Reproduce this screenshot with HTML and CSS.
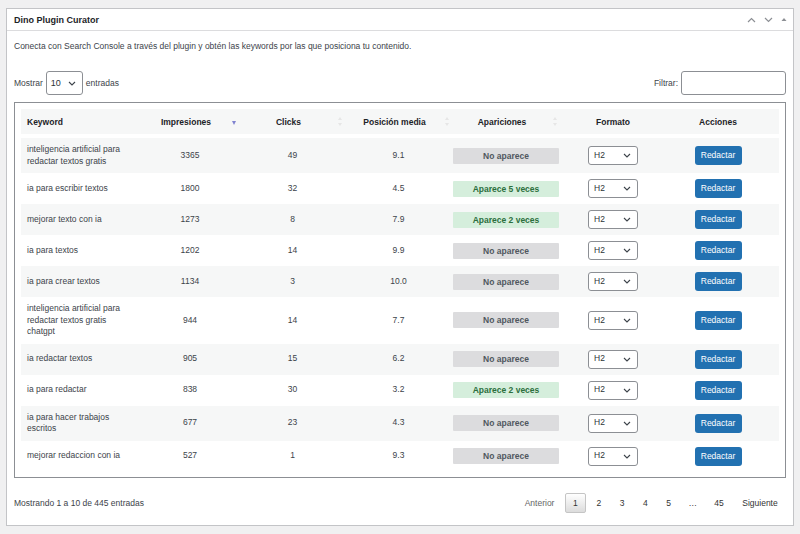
FILE: index.html
```html
<!DOCTYPE html>
<html lang="es">
<head>
<meta charset="utf-8">
<title>Dino Plugin Curator</title>
<link rel="stylesheet" href="styles.css">
</head>
<body>
<div class="panel">
  <div class="panel-head">
    <h2 class="panel-title">Dino Plugin Curator</h2>
    <div class="head-actions">
      <svg width="9" height="6" viewBox="0 0 9 6"><path d="M1 5 L4.5 1.5 L8 5" fill="none" stroke="#8c8f94" stroke-width="1.2"/></svg>
      <svg width="9" height="6" viewBox="0 0 9 6"><path d="M1 1 L4.5 4.5 L8 1" fill="none" stroke="#8c8f94" stroke-width="1.2"/></svg>
      <svg width="6" height="5" viewBox="0 0 6 5"><path d="M0.5 4 L3 1 L5.5 4 Z" fill="#8c8f94"/></svg>
    </div>
  </div>
  <div class="panel-body">
    <p class="desc">Conecta con Search Console a través del plugin y obtén las keywords por las que posiciona tu contenido.</p>
    <div class="controls">
      <label class="length">Mostrar
        <span class="sel sel-len"><span>10</span><svg width="8" height="5" viewBox="0 0 8 5"><path d="M1 1 L4 4 L7 1" fill="none" stroke="#3c434a" stroke-width="1.1"/></svg></span>
        entradas</label>
      <label class="filter">Filtrar: <span class="input"></span></label>
    </div>
    <div class="table-wrap">
      <table class="kw">
        <colgroup>
          <col style="width:119px"><col style="width:100px"><col style="width:105px"><col style="width:107px"><col style="width:108px"><col style="width:106px"><col style="width:113px">
        </colgroup>
        <thead>
          <tr>
            <th class="left">Keyword</th>
            <th class="sort">Impresiones<span class="ico active"></span></th>
            <th class="sort">Clicks<span class="ico both"></span></th>
            <th class="sort">Posición media<span class="ico both"></span></th>
            <th class="sort">Apariciones<span class="ico both"></span></th>
            <th>Formato</th>
            <th class="act">Acciones</th>
          </tr>
        </thead>
        <tbody id="rows"></tbody>
      </table>
    </div>
    <div class="footer">
      <div class="info">Mostrando 1 a 10 de 445 entradas</div>
      <div class="pager">
        <span class="pg disabled">Anterior</span>
        <span class="pg current">1</span>
        <span class="pg">2</span>
        <span class="pg">3</span>
        <span class="pg">4</span>
        <span class="pg">5</span>
        <span class="pg ell">…</span>
        <span class="pg">45</span>
        <span class="pg">Siguiente</span>
      </div>
    </div>
  </div>
</div>
<script>
var data = [
  ["inteligencia artificial para redactar textos gratis","3365","49","9.1",0],
  ["ia para escribir textos","1800","32","4.5",5],
  ["mejorar texto con ia","1273","8","7.9",2],
  ["ia para textos","1202","14","9.9",0],
  ["ia para crear textos","1134","3","10.0",0],
  ["inteligencia artificial para redactar textos gratis chatgpt","944","14","7.7",0],
  ["ia redactar textos","905","15","6.2",0],
  ["ia para redactar","838","30","3.2",2],
  ["ia para hacer trabajos escritos","677","23","4.3",0],
  ["mejorar redaccion con ia","527","1","9.3",0]
];
var html = "";
data.forEach(function(r){
  var badge = r[4] ? '<span class="badge yes">Aparece ' + r[4] + ' veces</span>' : '<span class="badge no">No aparece</span>';
  html += '<tr><td class="left">' + r[0] + '</td><td>' + r[1] + '</td><td>' + r[2] + '</td><td>' + r[3] + '</td>' +
    '<td class="bcell">' + badge + '</td>' +
    '<td><span class="sel sel-fmt"><span>H2</span><svg width="8" height="5" viewBox="0 0 8 5"><path d="M1 1 L4 4 L7 1" fill="none" stroke="#3c434a" stroke-width="1.1"/></svg></span></td>' +
    '<td class="act"><span class="btn">Redactar</span></td></tr>';
});
document.getElementById("rows").innerHTML = html;
</script>
</body>
</html>
```

FILE: styles.css
```css
* { box-sizing: border-box; }
html, body { margin: 0; padding: 0; }
body {
  background: #f0f0f1;
  font-family: "Liberation Sans", Arial, Helvetica, sans-serif;
  color: #3c434a;
  font-size: 8.5px;
  padding: 8px 6px 8px 6px;
}
.panel {
  background: #fff;
  border: 1px solid #c3c4c7;
  height: 518px;
}
.panel-head {
  height: 22px;
  border-bottom: 1px solid #dcdcde;
  display: flex;
  align-items: center;
  justify-content: space-between;
  padding: 0 6px 0 7px;
}
.panel-title {
  margin: 0;
  font-size: 9px;
  font-weight: bold;
  color: #1d2327;
}
.head-actions {
  display: flex;
  align-items: center;
  gap: 8px;
}
.panel-body {
  padding: 0 7px;
}
.desc {
  margin: 0;
  padding-top: 9px;
  line-height: 12px;
  font-size: 8.5px;
}
.controls {
  margin-top: 19px;
  height: 24px;
  display: flex;
  justify-content: space-between;
  align-items: center;
}
.length, .filter {
  display: flex;
  align-items: center;
  gap: 3px;
}
.sel {
  display: inline-flex;
  align-items: center;
  justify-content: space-between;
  background: #fff;
  border: 1px solid #8c8f94;
  border-radius: 3px;
  color: #2c3338;
}
.sel-len {
  width: 37px;
  height: 24px;
  padding: 0 6px 0 4px;
  font-size: 9px;
}
.sel-fmt {
  width: 50px;
  height: 19px;
  padding: 0 6px 0 5px;
  font-size: 8.5px;
  vertical-align: middle;
}
.input {
  display: inline-block;
  width: 105px;
  height: 24px;
  border: 1px solid #8c8f94;
  border-radius: 3px;
  background: #fff;
}
.table-wrap {
  margin-top: 7px;
  border: 1px solid #8c8f94;
  padding: 6px 6px 5px;
}
.kw {
  width: 758px;
  table-layout: fixed;
  border-collapse: collapse;
}
.kw th {
  background: #f6f7f7;
  height: 27px;
  border-bottom: 4px solid #fff;
  font-weight: bold;
  color: #1d2327;
  text-align: center;
  padding: 0 6px;
  position: relative;
}
.kw th.sort { padding: 0 12px 0 4px; }
.kw th.left, .kw td.left { text-align: left; }
.kw th.act, .kw td.act { padding-right: 9px; padding-left: 0; }
.ico {
  position: absolute;
  right: 2px;
  top: 50%;
}
.ico.active {
  margin-top: -1px;
  width: 0; height: 0;
  border-left: 2.5px solid transparent;
  border-right: 2.5px solid transparent;
  border-top: 4px solid #8083d0;
  right: 4px;
}
.ico.both {
  margin-top: -5px;
  width: 5px; height: 9px;
}
.ico.both::before, .ico.both::after {
  content: "";
  position: absolute;
  left: 0;
  width: 0; height: 0;
  border-left: 2.5px solid transparent;
  border-right: 2.5px solid transparent;
}
.ico.both::before { top: 0; border-bottom: 3.5px solid #e6e6e6; }
.ico.both::after { bottom: 0; border-top: 3.5px solid #e6e6e6; }
.kw td {
  padding: 6px;
  line-height: 11.5px;
  text-align: center;
  vertical-align: middle;
  color: #3c434a;
}
.kw tbody tr:nth-child(odd) td { background: #f6f7f7; }
.kw td.bcell { padding: 6px 0; }
.badge {
  display: inline-block;
  width: 106px;
  height: 16px;
  line-height: 16px;
  font-weight: bold;
  font-size: 8.5px;
  border-radius: 1px;
  vertical-align: middle;
}
.badge.no { background: #dcdcde; color: #50575e; }
.badge.yes { background: #d5eedc; color: #2c6e3c; }
.btn {
  display: inline-block;
  width: 47px;
  height: 19px;
  line-height: 19px;
  background: #2271b1;
  color: #fff;
  border-radius: 3px;
  font-size: 8.5px;
  vertical-align: middle;
}
.footer {
  margin-top: 15px;
  display: flex;
  justify-content: space-between;
  align-items: center;
  height: 21px;
}
.pager {
  display: flex;
  align-items: center;
  gap: 2px;
}
.pg {
  display: inline-block;
  padding: 0 7.3px;
  height: 20px;
  line-height: 18px;
  border: 1px solid transparent;
  border-radius: 2px;
  color: #333;
  text-align: center;
}
.pg.disabled { color: #666; }
.pg.ell { padding: 0 6px; }
.pg.current {
  border-color: #c5c5c5;
  background: linear-gradient(#fff, #dcdcdc);
}
```
